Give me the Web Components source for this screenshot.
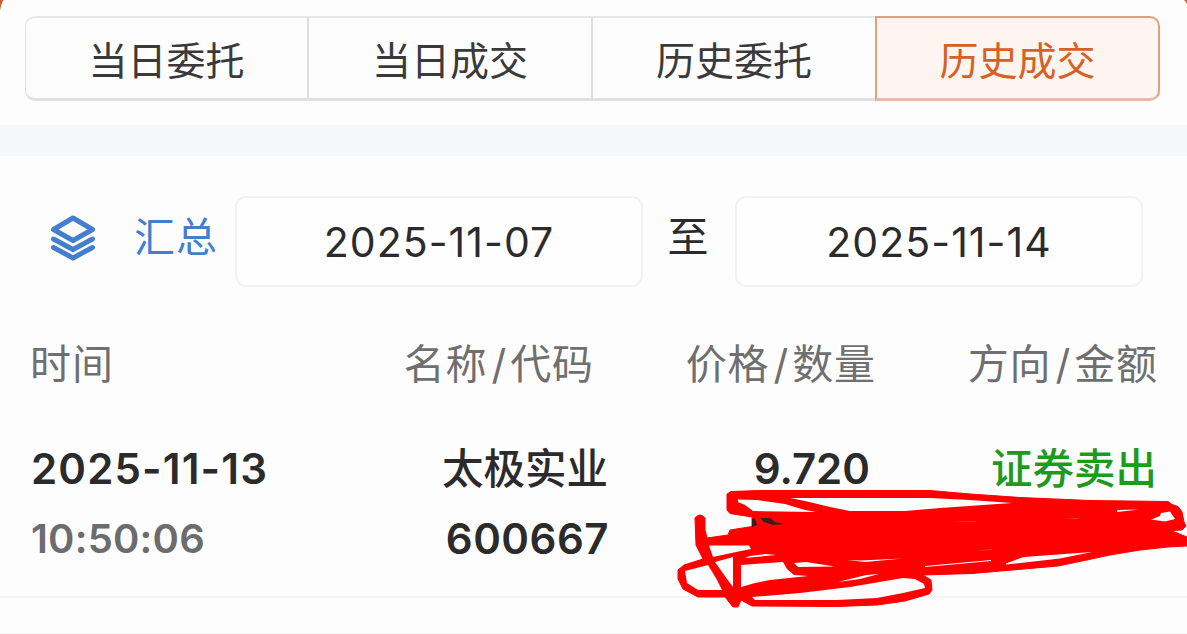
<!DOCTYPE html>
<html lang="zh-CN">
<head>
<meta charset="utf-8">
<title>历史成交</title>
<style>
  body {
    margin: 0;
    background: #fdfdfe;
    overflow: hidden;
    font-family: Inter, "Noto Sans CJK SC", sans-serif;
    color: #2b2b2b;
  }
</style>
</head>
<body>
<trade-page>
  <tab-bar slot="tabs">
    <tab-item>当日委托</tab-item>
    <tab-item>当日成交</tab-item>
    <tab-item>历史委托</tab-item>
    <tab-item active>历史成交</tab-item>
  </tab-bar>
  <date-filter from="2025-11-07" to="2025-11-14"></date-filter>
  <trade-table>
    <trade-head>
      <head-cell label="时间"></head-cell>
      <head-cell label="名称/代码"></head-cell>
      <head-cell label="价格/数量"></head-cell>
      <head-cell label="方向/金额"></head-cell>
    </trade-head>
    <trade-row date="2025-11-13" time="10:50:06" name="太极实业" code="600667" price="9.720" side="证券卖出"></trade-row>
  </trade-table>
</trade-page>

<script>
(function () {
  'use strict';

  /**
   * Base element, renders its markup once into an open shadow root
   * @extends {HTMLElement}
   */
  class BaseElement extends HTMLElement {
    constructor() {
      super();
      this._shadowRoot = this.attachShadow({ mode: 'open' });
    }

    connectedCallback() {
      this._shadowRoot.innerHTML = this._render();
    }

    /**
     * @param {string} name
     * @returns {string}
     */
    _attr(name) {
      return this.getAttribute(name) || '';
    }
  }

  class TradePage extends BaseElement {
    _render() {
      return `
      <style>
        :host {
          display: flex;
          flex-direction: column;
          position: relative;
          box-sizing: border-box;
          width: 1187px;
          height: 634px;
          border-bottom: 1px solid #f3f3f4;
          overflow: hidden;
        }

        header {
          padding: 16px 27px 24px 25px;
        }

        .band {
          height: 31px;
          flex: none;
          background: #f6f7fb;
        }

        .corners {
          position: absolute;
          top: 0;
          left: 0;
        }
      </style>

      <header><slot name="tabs"></slot></header>
      <div class="band"></div>
      <slot></slot>
      <svg class="corners" width="1187" height="12" fill="#c4622f">
        <path d="M0 0h3.500Q1 4 0 11z"/>
        <path d="M1187 0h-3q2 1.500 3 4z"/>
      </svg>
    `;
    }
  }

  class TabBar extends BaseElement {
    _render() {
      return `
      <style>
        :host {
          display: grid;
          grid-template-columns: 284px 284px 284px 283px;
          box-sizing: border-box;
          height: 85px;
        }

        ::slotted(:first-child) {
          border-left: 1px solid #dcdde1;
          border-radius: 10px 0 0 10px;
        }

        ::slotted(:last-child) {
          border-radius: 0 10px 10px 0;
        }
      </style>

      <slot></slot>
    `;
    }
  }

  class TabItem extends BaseElement {
    _render() {
      return `
      <style>
        :host {
          display: flex;
          align-items: center;
          justify-content: center;
          box-sizing: border-box;
          padding-top: 4px;
          border-top: 2px solid #e6e7ea;
          border-bottom: 3px solid #dfe0e3;
          border-right: 2px solid #dcdde1;
          font-size: 39px;
          line-height: 1;
          color: #3a3a3a;
        }

        :host([active]) {
          margin-left: -2px;
          border: 2px solid #dda184;
          border-bottom: 3px solid #e3bba8;
          background: #fef4f0;
          color: #d9601f;
        }
      </style>

      <slot></slot>
    `;
    }
  }

  class DateFilter extends BaseElement {
    _render() {
      return `
      <style>
        :host {
          display: flex;
          align-items: center;
          height: 91px;
          padding: 40px 44px 0 50px;
          font-size: 41px;
          line-height: 1;
        }

        svg {
          flex: none;
          margin: -7px 38px 0 0;
        }

        .summary {
          width: 101px;
          margin-top: -8px;
          color: #437fce;
          letter-spacing: 1px;
        }

        .to {
          width: 92px;
          margin-top: -9px;
          padding-right: 2px;
          box-sizing: border-box;
          text-align: center;
        }

        .date {
          display: flex;
          flex: 1;
          align-items: center;
          justify-content: center;
          box-sizing: border-box;
          height: 91px;
          padding-top: 1px;
          border: 2px solid #f2f2f3;
          border-radius: 11px;
          background: #fefefe;
          letter-spacing: 1.050px;
        }
      </style>

      <svg width="46" height="46" viewBox="0 0 46 46" fill="none" stroke="#437fce" stroke-width="5" stroke-linecap="round" stroke-linejoin="round">
        <path d="M23 3 42.500 14.500 23 25.500 3.500 14.500z"/>
        <path d="M3.500 24 23 34.500 42.500 24"/>
        <path d="M3.500 32.500 23 43 42.500 32.500"/>
      </svg>
      <span class="summary">汇总</span>
      <span class="date">${this._attr('from')}</span>
      <span class="to">至</span>
      <span class="date">${this._attr('to')}</span>
    `;
    }
  }

  class TradeTable extends BaseElement {
    _render() {
      return `
      <style>
        :host {
          display: block;
          padding-top: 49px;
        }
      </style>

      <slot></slot>
    `;
    }
  }

  class TradeHead extends BaseElement {
    _render() {
      return `
      <style>
        :host {
          display: grid;
          grid-template-columns: repeat(4, 282px);
          align-items: center;
          height: 56px;
          padding-left: 30px;
          font-size: 41px;
          line-height: 1;
          color: #6f6f6f;
          text-align: right;
        }

        ::slotted(:first-child) {
          text-align: left;
        }
      </style>

      <slot></slot>
    `;
    }
  }

  /**
   * Column title, the slash gets some room on both sides
   * @extends {BaseElement}
   */
  class HeadCell extends BaseElement {
    _render() {
      return `
      <style>
        :host {
          display: block;
          white-space: nowrap;
          letter-spacing: 0.900px;
        }

        i {
          padding: 0 3px 0 4px;
          font-style: normal;
        }
      </style>

      <span>${this._attr('label').replace('/', '<i>/</i>')}</span>
    `;
    }
  }

  class TradeRow extends BaseElement {
    _render() {
      return `
      <style>
        :host {
          display: grid;
          grid-template-columns: 282px 296px 261px 287px;
          grid-template-rows: 70px 70px;
          align-items: center;
          position: relative;
          height: 161px;
          padding: 42px 0 1px 31px;
          border-bottom: 2px solid #f5f5f6;
          font-size: 42px;
          font-weight: 600;
          line-height: 1;
          color: #2b2b2b;
        }

        span {
          text-align: right;
          white-space: nowrap;
        }

        .date,
        .time {
          text-align: left;
        }

        .date {
          letter-spacing: 1.150px;
        }

        .time {
          color: #6c6c6c;
          font-size: 40px;
          letter-spacing: 0.200px;
        }

        .code {
          letter-spacing: 0.500px;
        }

        .name,
        .side {
          padding-top: 2px;
          font-size: 41.500px;
          font-weight: 500;
        }

        .name {
          padding-right: 1px;
        }

        .side {
          color: #1e9a1e;
        }

        scribble-mark {
          position: absolute;
          top: 58px;
          left: 670px;
        }
      </style>

      <span class="date">${this._attr('date')}</span>
      <span class="name">${this._attr('name')}</span>
      <span class="price">${this._attr('price')}</span>
      <span class="side">${this._attr('side')}</span>
      <span class="time">${this._attr('time')}</span>
      <span class="code">${this._attr('code')}</span>
      <scribble-mark></scribble-mark>
    `;
    }
  }

  /**
   * Red pen scribble that hides the quantity and the amount
   * @extends {BaseElement}
   */
  class ScribbleMark extends BaseElement {
    _render() {
      return `
      <style>
        :host {
          display: block;
        }

        svg {
          display: block;
        }
      </style>

      <svg width="517" height="160" viewBox="670 450 517 160">
        <path fill="#f00" stroke="#f00" stroke-linejoin="round" d="M727 494 731 491.500 760 490.500H930L970 494 1020 497.500 1090 500.500 1168 501.500 1172 504.500 1178 506.500 1182 512 1184 522 1186 526 1182 530 1171 530.500 1187 537V546L1168 547 1140 550 1110 555 1082 561 1058 566 972 573.500 923 575 931 580 932 590 929 594 905 601 877 605 837 606.500 752 606 741 600 738 607 733 607 725 597 698 597 683 589 678 579 678 570 684 565 703 559 696 545 695 518Q700 512 705 518V530L707 538 728 535 730 530 752 526.500V517L730 513.500 727 510z"/>
        <g fill="#fdfdfe">
          <path d="M709 545.500 749 545.500 751 549 736 552 713 557z"/>
          <path d="M685 571 708 565 717 580 722 590 698 590 687 583z"/>
          <path d="M715 562 733 557V587L727 579z"/>
          <path d="M741 565 783 562 787 569 794 575 808 576 770 580 755 583 741 587z"/>
          <path d="M750 556 765 554 776 555 745 558z"/>
          <path d="M794 563 806 562 835 566.500 798 567z"/>
          <path d="M738 499.500 757 500 785 504 805 510 816 512 753 511 745 505 738 502z"/>
          <path d="M790 498H930L970 500 1012 503 940 508 905 511H850L830 507 805 501z"/>
          <path d="M752 597 800 593 850 587 903 578 915 579 924 584 925 588 903 593 877 598 837 600 755 600z"/>
          <path d="M838 582 866 575 879 574 860 579z"/>
          <path d="M847 560 860 560.500 903 558.500 865 562z"/>
          <path d="M1117 510 1139 509.500 1117 512z"/>
          <path d="M1151 519.500 1160 516 1161 513 1170 511.500 1175 519 1165 521.500z"/>
          <path d="M1006 563.500 1022 557.500 1030 556.500 1092 552 1060 558.500 1006 564.500z"/>
          <path d="M925 566 991 560V561L925 567z"/>
        </g>
        <path fill="#d44" d="M950 522 975 521V522zM975 551 992 549V550zM1062 518 1078 518V519z"/>
        <path fill="#43191c" d="M752 518.500H755L757 525 752 527zM760 518 770 518 775 522 784 524 773 525 764 522z"/>
      </svg>
    `;
    }
  }

  /**
   * main function that registers every element.
   *
   * @returns {void}
   */
  function main() {
    customElements.define('trade-page', TradePage);
    customElements.define('tab-bar', TabBar);
    customElements.define('tab-item', TabItem);
    customElements.define('date-filter', DateFilter);
    customElements.define('trade-table', TradeTable);
    customElements.define('trade-head', TradeHead);
    customElements.define('head-cell', HeadCell);
    customElements.define('trade-row', TradeRow);
    customElements.define('scribble-mark', ScribbleMark);
  }

  // Run main
  main();
})();
</script>
</body>
</html>
